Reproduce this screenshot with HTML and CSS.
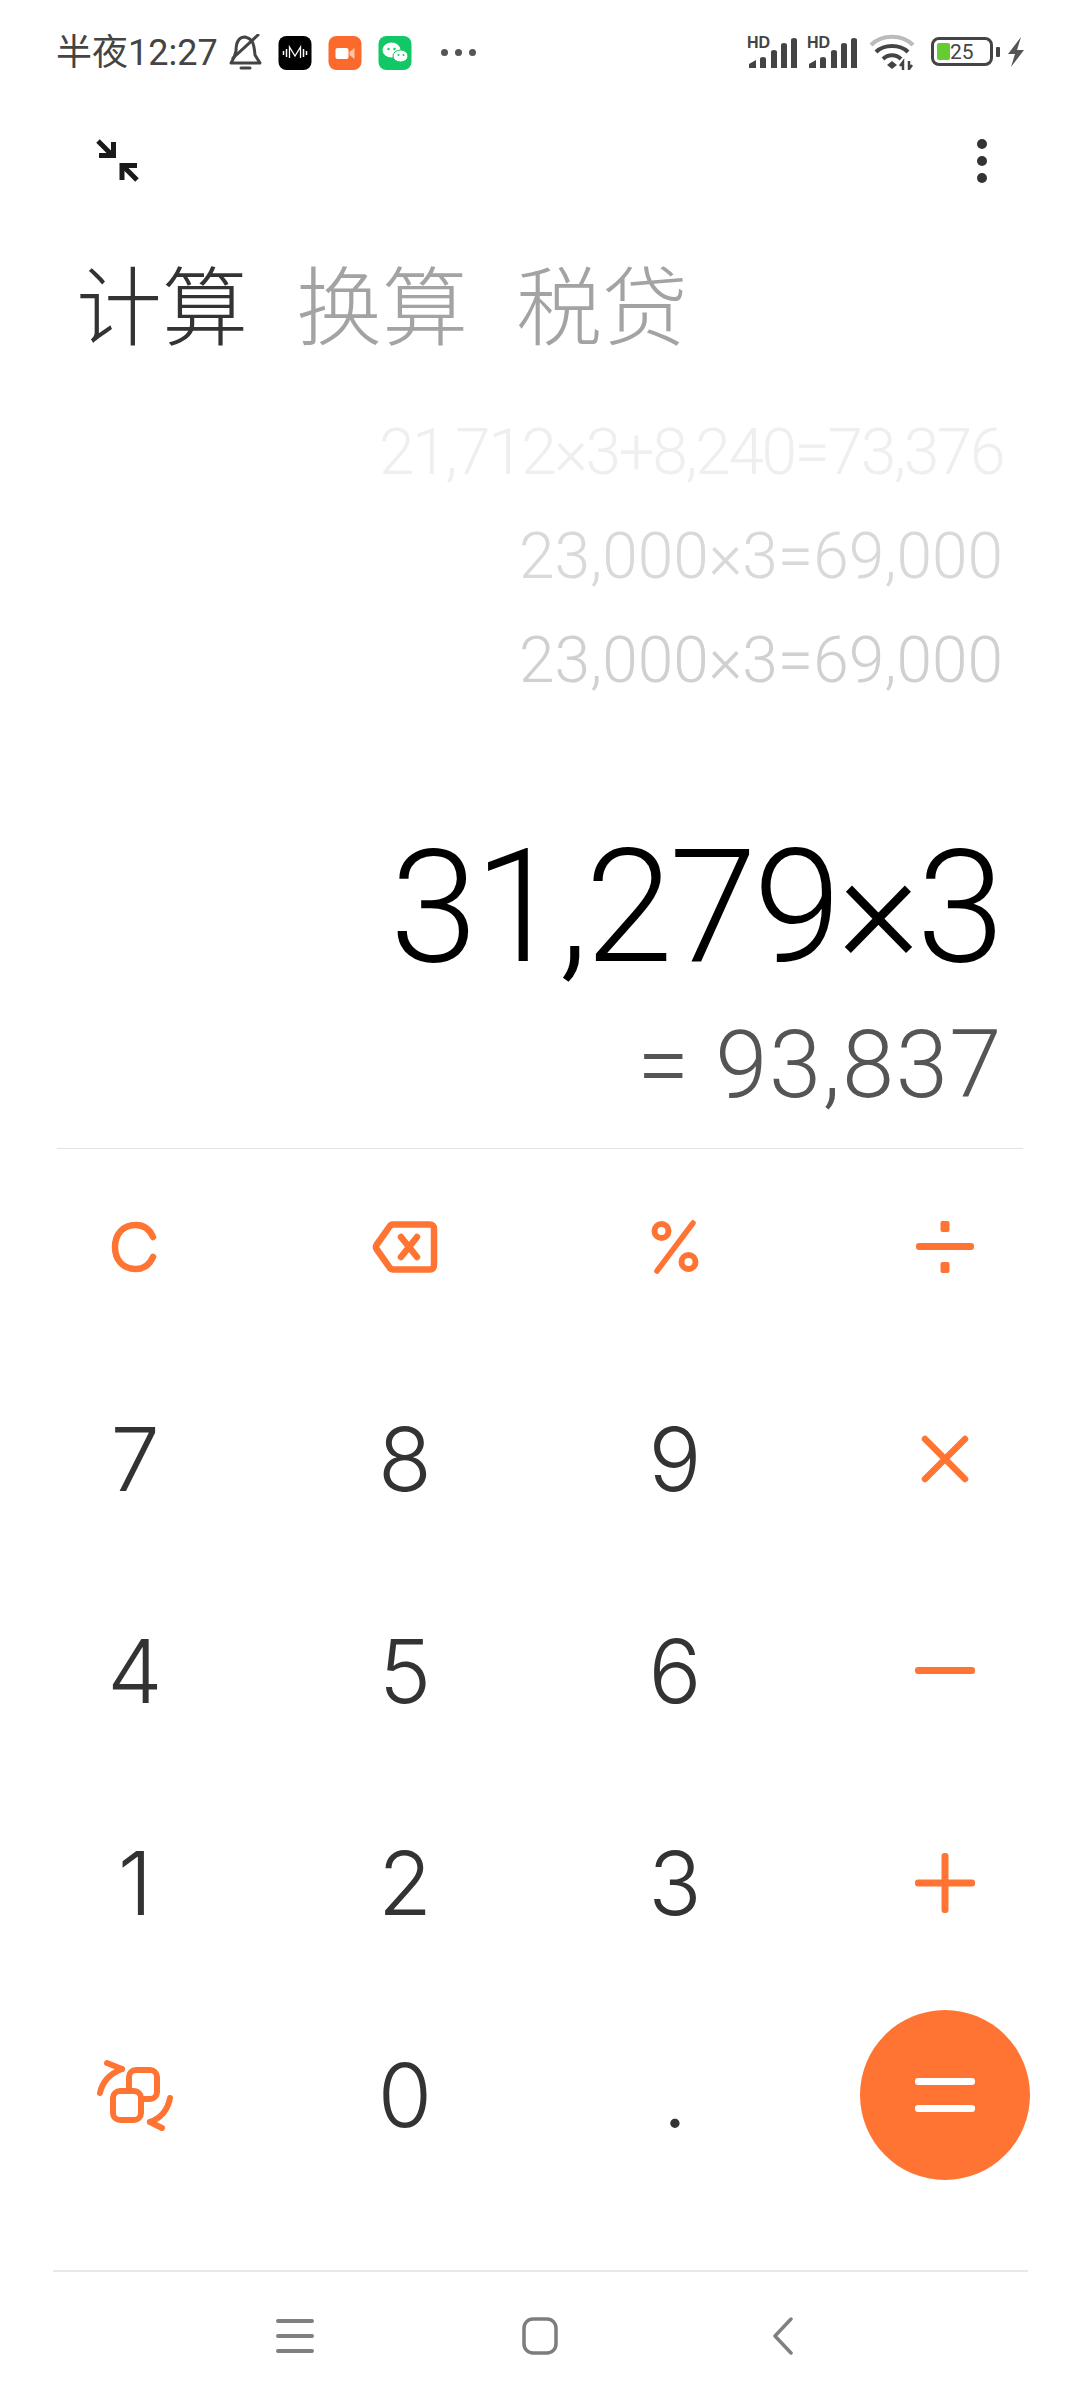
FILE: index.html
```html
<!DOCTYPE html>
<html lang="zh-CN">
<head>
    <meta charset="UTF-8">
    <meta name="viewport" content="width=device-width, initial-scale=1.0">
    <title>计算器</title>
    <link rel="stylesheet" href="styles.css">
</head>
<body>
    <div class="phone">
        <div class="status-bar">
            <div class="status-left">
                <span class="clock">半夜12:27</span>
                <svg class="bell" width="33" height="37" viewBox="0 0 33 37" fill="none" stroke="#444" stroke-width="3" stroke-linecap="round" stroke-linejoin="round">
                    <path d="M2 29H31L26 21C25 12 25 5 16 3 9 3 7 10 7 17 6 22 4 26 2 29z"/>
                    <path d="M4 24 29 1"/>
                    <path d="M12 34H21"/>
                </svg>
                <svg class="app" width="34" height="34" viewBox="0 0 33 34">
                    <rect width="33" height="34" rx="8" fill="#000"/>
                    <path d="M5 15v4M8 13v8M25 13v8M28 15v4" stroke="#fff" stroke-width="1.500"/>
                    <path d="M11 22V11l5.500 9L22 11v11" stroke="#fff" stroke-width="1.300" fill="none"/>
                </svg>
                <svg class="app" width="34" height="34" viewBox="0 0 33 34">
                    <rect width="33" height="34" rx="8" fill="#fb6a2c"/>
                    <rect x="7" y="12" width="13" height="11" rx="2" fill="#fff"/>
                    <path d="M21 16l5-4v11l-5-4z" fill="#fcc6a4"/>
                </svg>
                <svg class="app" width="34" height="34" viewBox="0 0 33 34">
                    <rect width="33" height="34" rx="8" fill="#12c766"/>
                    <ellipse cx="13" cy="14" rx="9" ry="7.500" fill="#fff"/>
                    <ellipse cx="22" cy="20" rx="7.500" ry="6" fill="#fff" stroke="#12c766"/>
                    <circle cx="10" cy="13" r="1.200" fill="#12c766"/>
                    <circle cx="16" cy="13" r="1.200" fill="#12c766"/>
                    <circle cx="20" cy="19" r="1" fill="#12c766"/>
                    <circle cx="25" cy="19" r="1" fill="#12c766"/>
                </svg>
                <div class="more-dots"><i></i><i></i><i></i></div>
            </div>
            <div class="status-right">
                <svg class="signal" width="52" height="36" viewBox="0 0 52 36">
                    <text x="0" y="14" class="hd">HD</text>
                    <path d="M2 30l7-4v8H2zM13 25a3 2 0 0 1 6 0v9h-6zM24 18a3 2 0 0 1 6 0v16h-6zM34 11a3 2 0 0 1 6 0v23h-6zM44 6a3 2 0 0 1 6 0v28h-6z" fill="#444"/>
                </svg>
                <svg class="signal" width="52" height="36" viewBox="0 0 52 36">
                    <text x="0" y="14" class="hd">HD</text>
                    <path d="M2 30l7-4v8H2zM13 25a3 2 0 0 1 6 0v9h-6zM24 18a3 2 0 0 1 6 0v16h-6zM34 11a3 2 0 0 1 6 0v23h-6zM44 6a3 2 0 0 1 6 0v28h-6z" fill="#444"/>
                </svg>
                <svg class="wifi" width="46" height="36" viewBox="0 0 46 36" fill="none" stroke-width="4">
                    <path d="M2 11C13 0 33 0 44 11" stroke="#bbb"/>
                    <path d="M7 18C15 10 31 10 39 18" stroke="#444"/>
                    <path d="M14 25C19 20 27 20 32 25" stroke="#444"/>
                    <path d="M18 31l5-4 5 4-5 4z" fill="#444" stroke="none"/>
                    <path d="M34 36V28l-3 4M40 27v8l3-4" stroke="#444" stroke-width="2.500"/>
                </svg>
                <div class="battery">
                    <div class="battery-body">
                        <span class="battery-fill"></span>
                        <span class="battery-num">25</span>
                    </div>
                    <span class="battery-cap"></span>
                </div>
                <svg class="bolt" width="18" height="30" viewBox="0 0 18 30">
                    <path d="M14 0 1 17H8L4 30 17 13H10z" fill="#555"/>
                </svg>
            </div>
        </div>

        <div class="toolbar">
            <svg width="44" height="44" viewBox="0 0 44 44" fill="none" stroke="#1a1a1a" stroke-width="5">
                <path d="M2 2 16 16"/>
                <path d="M3 16.500H17.500V3"/>
                <path d="M41 41 27 27"/>
                <path d="M26 41V26.500H41"/>
            </svg>
            <div class="kebab"><i></i><i></i><i></i></div>
        </div>

        <div class="tabs">
            <span class="tab active">计算</span>
            <span class="tab">换算</span>
            <span class="tab">税贷</span>
        </div>

        <div class="display">
            <div class="history faint">21,712×3+8,240=73,376</div>
            <div class="history mid">23,000×3=69,000</div>
            <div class="history">23,000×3=69,000</div>
            <div class="expression">31,279×3</div>
            <div class="result">= 93,837</div>
        </div>

        <div class="keypad">
            <button class="key op">
                <svg width="48" height="52" viewBox="0 0 48 52" fill="none" stroke="#ff7433" stroke-width="6.500" stroke-linecap="round">
                    <path d="M42 16C38 7 32 4 25 4 12 4 4 13 4 26s8 22 21 22c7 0 13-3 17-12"/>
                </svg>
            </button>
            <button class="key op">
                <svg width="66" height="52" viewBox="0 0 66 52" fill="none" stroke="#ff7433" stroke-width="6.500" stroke-linecap="round" stroke-linejoin="round">
                    <path d="M21 3.500H58a4 4 0 0 1 4 4V44.500a4 4 0 0 1-4 4H21a4 4 0 0 1-3.500-2.200L4.500 28a4 4 0 0 1 0-4L17.500 5.700A4 4 0 0 1 21 3.500z"/>
                    <path d="M29 16 45 36M45 16 29 36"/>
                </svg>
            </button>
            <button class="key op">
                <svg width="50" height="54" viewBox="0 0 50 54" fill="none" stroke="#ff7433" stroke-width="6" stroke-linecap="round">
                    <circle cx="11.500" cy="11" r="7"/>
                    <circle cx="38.500" cy="42" r="7"/>
                    <path d="M43 3 7 51" stroke-width="5.500"/>
                </svg>
            </button>
            <button class="key op">
                <svg width="58" height="54" viewBox="0 0 58 54" fill="#ff7433">
                    <rect x="24.500" y="1" width="9" height="11" rx="2"/>
                    <rect x="0" y="23" width="58" height="7" rx="3"/>
                    <rect x="24.500" y="42" width="9" height="11" rx="2"/>
                </svg>
            </button>

            <button class="key">7</button>
            <button class="key">8</button>
            <button class="key">9</button>
            <button class="key op">
                <svg width="48" height="48" viewBox="0 0 48 48" stroke="#ff7433" stroke-width="6.500" stroke-linecap="round">
                    <path d="M4 4 44 44M44 4 4 44"/>
                </svg>
            </button>

            <button class="key">4</button>
            <button class="key">5</button>
            <button class="key">6</button>
            <button class="key op">
                <svg width="60" height="8" viewBox="0 0 60 8">
                    <rect width="60" height="7" rx="3" fill="#ff7433"/>
                </svg>
            </button>

            <button class="key">1</button>
            <button class="key">2</button>
            <button class="key">3</button>
            <button class="key op">
                <svg width="60" height="60" viewBox="0 0 60 60" fill="#ff7433">
                    <rect y="26.500" width="60" height="7" rx="3"/>
                    <rect x="26.500" width="7" height="60" rx="3"/>
                </svg>
            </button>

            <button class="key op">
                <svg width="78" height="72" viewBox="0 0 78 72" fill="none" stroke="#ff7433" stroke-width="6" stroke-linecap="round" stroke-linejoin="round">
                    <rect x="33" y="11" width="28" height="29" rx="7"/>
                    <rect x="17" y="32" width="28" height="29" rx="7" fill="#fff"/>
                    <path d="M4 34C6 24 13 15 26 10"/>
                    <path d="M11 4 26 10"/>
                    <path d="M74 39C72 50 65 59 54 63"/>
                    <path d="M66 69 54 63"/>
                </svg>
            </button>
            <button class="key">0</button>
            <button class="key">.</button>
            <button class="key op">
                <span class="equals">
                    <svg width="60" height="34" viewBox="0 0 60 34" fill="#fff">
                        <rect width="60" height="7" rx="3"/>
                        <rect y="27" width="60" height="7" rx="3"/>
                    </svg>
                </span>
            </button>
        </div>

        <div class="nav-bar">
            <svg width="38" height="38" viewBox="0 0 38 38" stroke="#808080" stroke-width="4" stroke-linecap="round">
                <path d="M2 4H36M2 19H36M2 34H36"/>
            </svg>
            <svg width="36" height="38" viewBox="0 0 36 38" fill="none" stroke="#7d7d7d" stroke-width="3.500">
                <rect x="2" y="2" width="32" height="34" rx="9"/>
            </svg>
            <svg class="nav-back" width="22" height="38" viewBox="0 0 22 38" fill="none" stroke="#808080" stroke-width="3.500" stroke-linecap="round" stroke-linejoin="round">
                <path d="M19 2 3 19 19 36"/>
            </svg>
        </div>
    </div>
</body>
</html>
```

FILE: styles.css
```css
* {
    box-sizing: border-box;
}
body {
    margin: 0;
    background: #fff;
    font-family: Roboto, 'Noto Sans CJK SC', sans-serif;
}
.phone {
    width: 1080px;
    height: 2400px;
    background: #fff;
    overflow: hidden;
}
.status-bar {
    height: 104px;
    padding: 34px 0 0 56px;
    display: flex;
    justify-content: space-between;
    align-items: flex-start;
}
.status-left {
    display: flex;
    align-items: center;
    height: 37px;
}
.clock {
    font-size: 36px;
    color: #444;
    line-height: 36px;
}
.bell {
    margin-left: 11px;
}
.app {
    margin-left: 16px;
}
.more-dots {
    display: flex;
    gap: 7px;
    margin-left: 29px;
}
.more-dots i {
    width: 7px;
    height: 7px;
    border-radius: 50%;
    background: #555;
}
.status-right {
    display: flex;
    align-items: flex-start;
    padding-right: 55px;
}
.signal {
    margin-right: 8px;
}
.wifi {
    margin-left: 2px;
}
.hd {
    font: bold 16px 'Liberation Sans', sans-serif;
    fill: #444;
}
.battery {
    display: flex;
    align-items: center;
    margin-left: 16px;
    margin-top: 3px;
}
.battery-body {
    width: 62px;
    height: 29px;
    border: 3px solid #444;
    border-radius: 8px;
    padding: 3px;
    display: flex;
    align-items: center;
}
.battery-fill {
    width: 13px;
    height: 17px;
    background: #66cc33;
    border-radius: 2px;
}
.battery-num {
    font-size: 21px;
    color: #444;
}
.battery-cap {
    width: 4px;
    height: 10px;
    background: #444;
    margin-left: 3px;
    border-radius: 1px;
}
.bolt {
    margin: 3px 0 0 7px;
}
.toolbar {
    height: 148px;
    padding: 35px 93px 0 96px;
    display: flex;
    justify-content: space-between;
}
.kebab {
    display: flex;
    flex-direction: column;
    gap: 7px;
}
.kebab i {
    width: 10px;
    height: 10px;
    border-radius: 50%;
    background: #333;
}
.tabs {
    display: flex;
    gap: 48px;
    padding: 0 0 0 76px;
    height: 100px;
    align-items: center;
}
.tab {
    font-family: 'Noto Sans CJK SC', sans-serif;
    font-weight: 300;
    font-size: 86px;
    line-height: 100px;
    color: #a3a3a3;
}
.tab.active {
    color: #333;
}
.display {
    height: 797px;
    margin: 0 57px;
    padding: 49px 20px 0 0;
    border-bottom: 1px solid #e3e3e3;
    text-align: right;
    font-weight: 300;
}
.history {
    font-size: 64px;
    line-height: 104px;
    color: #d0d0d0;
}
.history.mid {
    color: #d9d9d9;
}
.history.faint {
    color: #efefef;
    letter-spacing: -2.400px;
}
.expression {
    margin: 99px 2px 0 0;
    font-size: 158px;
    line-height: 190px;
    letter-spacing: -3.500px;
    font-weight: 350;
    color: #000;
}
.result {
    margin-top: 3px;
    font-size: 94px;
    line-height: 120px;
    letter-spacing: 1.500px;
    color: #555;
}
.keypad {
    margin-top: -8px;
    display: grid;
    grid-template-columns: repeat(4, 270px);
    grid-auto-rows: 212px;
}
.key {
    border: none;
    background: none;
    padding: 0;
    font-family: Inter, sans-serif;
    font-weight: 350;
    font-size: 88px;
    color: #333;
    display: flex;
    align-items: center;
    justify-content: center;
}
.equals {
    width: 170px;
    height: 170px;
    border-radius: 50%;
    background: #ff7433;
    display: flex;
    align-items: center;
    justify-content: center;
}
.nav-bar {
    margin: 69px 52px 0 53px;
    height: 130px;
    border-top: 2px solid #e8e8e8;
    display: flex;
    align-items: center;
    gap: 208px;
    padding-left: 223px;
}
.nav-back {
    margin-left: 6px;
}
```
